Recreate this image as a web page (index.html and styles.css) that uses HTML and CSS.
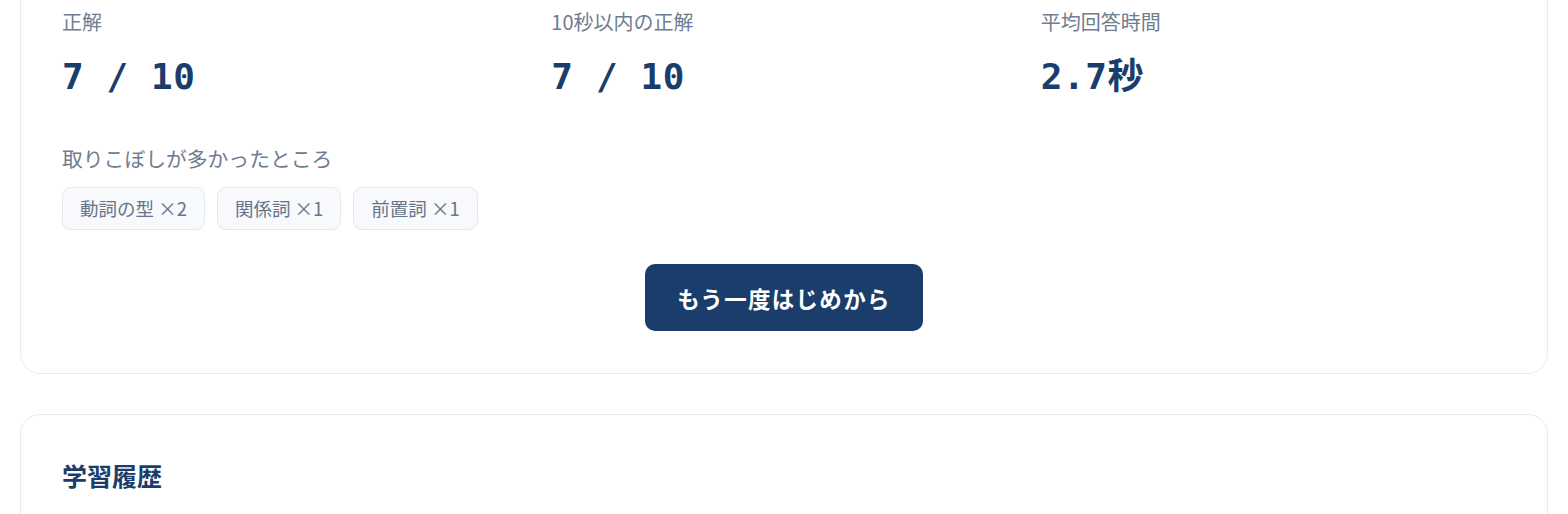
FILE: index.html
```html
<!DOCTYPE html>
<html lang="ja">
<head>
<meta charset="utf-8">
<title>結果</title>
<link rel="stylesheet" href="styles.css">
</head>
<body>
<main class="page">
  <section class="card result-card">
    <div class="stats">
      <div class="stat">
        <div class="stat-label">正解</div>
        <div class="stat-value">7 / 10</div>
      </div>
      <div class="stat">
        <div class="stat-label">10秒以内の正解</div>
        <div class="stat-value">7 / 10</div>
      </div>
      <div class="stat">
        <div class="stat-label">平均回答時間</div>
        <div class="stat-value">2.7秒</div>
      </div>
    </div>
    <div class="weak">
      <div class="weak-title">取りこぼしが多かったところ</div>
      <div class="chips">
        <span class="chip">動詞の型 ×2</span>
        <span class="chip">関係詞 ×1</span>
        <span class="chip">前置詞 ×1</span>
      </div>
    </div>
    <div class="actions">
      <button class="btn-primary" type="button">もう一度はじめから</button>
    </div>
  </section>
  <section class="card history-card">
    <h2 class="card-title">学習履歴</h2>
  </section>
</main>
</body>
</html>
```

FILE: styles.css
```css
* { box-sizing: border-box; }
html, body { margin: 0; padding: 0; background: #ffffff; }
body {
  font-family: "Noto Sans CJK JP", "Noto Sans", sans-serif;
  color: #1a3d6b;
  overflow: hidden;
}
.page {
  padding: 0 20px;
  display: flex;
  flex-direction: column;
  gap: 40px;
}
.card {
  background: #ffffff;
  border: 1.5px solid #e6ebf1;
  border-radius: 20px;
  padding: 42px 41px;
}
.result-card { margin-top: -36px; }
.stats {
  display: grid;
  grid-template-columns: repeat(3, 1fr);
  gap: 24px;
}
.stat-label {
  font-size: 20px;
  line-height: 30px;
  color: #6f7d90;
}
.stat-value {
  margin-top: 18px;
  font-family: "DejaVu Sans Mono", "Noto Sans CJK JP", monospace;
  font-weight: 700;
  font-size: 36px;
  line-height: 43px;
  letter-spacing: 0.6px;
  color: #1a3d6b;
}
.weak { margin-top: 45px; }
.weak-title {
  font-size: 20.8px;
  line-height: 30px;
  color: #6f7d90;
}
.chips {
  margin-top: 14px;
  display: flex;
  gap: 12px;
}
.chip {
  display: inline-block;
  font-size: 18.5px;
  line-height: 25px;
  padding: 8px 17px;
  border: 1.5px solid #e3e8ef;
  background: #f7f9fc;
  border-radius: 9px;
  color: #66758a;
}
.actions {
  margin-top: 34px;
  display: flex;
  justify-content: center;
}
.btn-primary {
  font-family: "Noto Sans CJK JP", "Noto Sans", sans-serif;
  font-weight: 700;
  font-size: 22.5px;
  line-height: 34px;
  letter-spacing: 1.3px;
  padding: 16.5px 32px;
  border: none;
  border-radius: 10px;
  background: #1a3d6b;
  color: #ffffff;
}
.card-title {
  margin: 0;
  font-size: 25px;
  line-height: 36px;
  font-weight: 700;
  color: #1a3d6b;
}
```
